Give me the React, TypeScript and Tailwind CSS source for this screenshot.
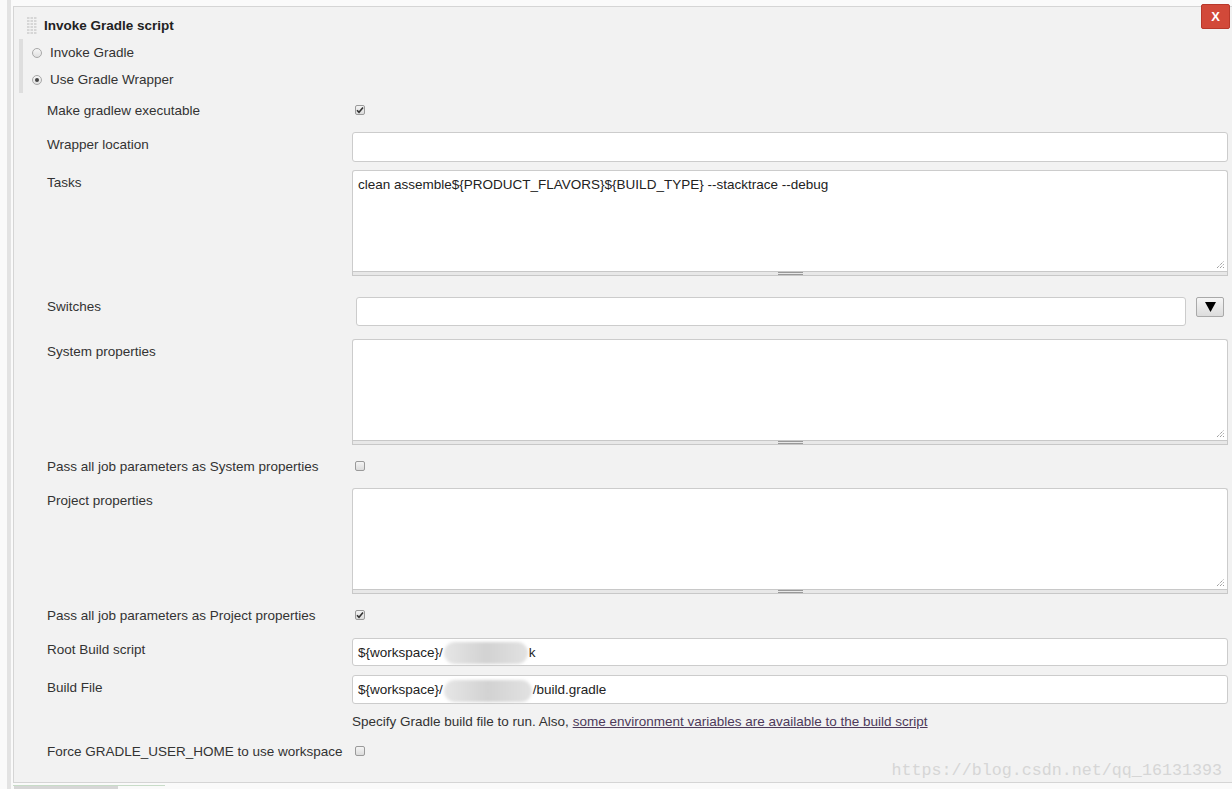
import React from "react";

const font = { fontFamily: '"Liberation Sans", Arial, sans-serif' };

function Checkbox({ checked }: { checked?: boolean }) {
    return (
        <span className="ml-[3px] flex h-[10px] w-[10px] items-center justify-center rounded-[2px] border border-[#9a9a9a] bg-gradient-to-b from-[#f4f4f4] to-[#dcdcdc]">
            {checked && (
                <svg width="8" height="8" viewBox="0 0 8 8">
                    <path d="M1 4.2 L3 6.3 L7 1.5" fill="none" stroke="#333" strokeWidth="1.6" />
                </svg>
            )}
        </span>
    );
}

function Radio({ checked, label }: { checked?: boolean; label: string }) {
    return (
        <div className="flex h-[27px] items-center">
            <span className="ml-[9px] flex h-[10px] w-[10px] items-center justify-center rounded-full border border-[#a8a8a8] bg-gradient-to-b from-[#f6f6f6] to-[#e0e0e0]">
                {checked && <span className="h-[4px] w-[4px] rounded-full bg-[#444]" />}
            </span>
            <span className="ml-[8px] pt-[2px] text-[13.5px] text-[#333]">{label}</span>
        </div>
    );
}

function Label({ children, pt = 0 }: { children: React.ReactNode; pt?: number }) {
    return (
        <div
            className="w-[305px] shrink-0 whitespace-nowrap text-[13.5px] leading-[18px] text-[#333]"
            style={{ paddingTop: pt + 1 }}
        >
            {children}
        </div>
    );
}

function TextArea({ value }: { value?: string }) {
    return (
        <div className="flex-1">
            <div className="relative h-[101px] rounded-t-[3px] border border-b-0 border-[#cccccc] bg-white pl-[5px] pt-[5px] text-[13.5px] leading-[18px] text-[#222]">
                {value}
                <svg className="absolute bottom-[2px] right-[2px]" width="9" height="9" viewBox="0 0 9 9">
                    <path d="M1 8 L8 1 M4 8 L8 4 M7 8 L8 7" stroke="#777" strokeWidth="1" strokeDasharray="1 1" />
                </svg>
            </div>
            <div className="flex h-[5px] items-center justify-center border border-[#c8c8c8] bg-[#e8e8e8]">
                <div className="flex w-[25px] flex-col gap-[1px]">
                    <span className="h-[1px] bg-[#999]" />
                    <span className="h-[1px] bg-[#999]" />
                </div>
            </div>
        </div>
    );
}

// blurred-out part of a path
function Blob({ w }: { w: number }) {
    return (
        <span className="relative inline-block h-[24px]" style={{ width: w }}>
            <span className="absolute inset-x-[1px] inset-y-[1px] rounded-full bg-gradient-to-r from-[#e6e6e6] via-[#d2d2d2] to-[#e2e2e2] blur-[1.5px]" />
        </span>
    );
}

export default function App() {
    return (
        <div className="relative flex h-[789px] w-[1232px] overflow-hidden bg-[#fafafa]" style={font}>
            <div className="ml-[7px] h-full w-[4px] bg-[#e3e3e3]" />
            <div className="ml-[2px] flex flex-1 flex-col">
                <div className="relative mt-[6px] h-[778px] border-b border-l border-t border-[#d5d5d5] bg-[#f2f2f2] pr-[4px]">
                    <button className="absolute right-[2px] top-[-3px] flex h-[25px] w-[29px] items-center justify-center rounded-[2px] border border-[#b8382a] bg-[#d24939] text-[13px] font-bold text-white">
                        X
                    </button>

                    {/* header */}
                    <div className="mt-[8px] flex h-[20px] items-center">
                        <svg className="ml-[13px]" width="10" height="17" viewBox="0 0 10 17">
                            {Array.from({ length: 6 }).map((_, r) =>
                                [0, 1, 2].map(c => (
                                    <rect key={`${r}-${c}`} x={c * 3.5} y={r * 3} width="2.5" height="2" fill="#d6d6d6" />
                                ))
                            )}
                        </svg>
                        <span className="ml-[7px] pt-[2px] text-[13.5px] font-bold text-[#222]">Invoke Gradle script</span>
                    </div>

                    {/* radio group */}
                    <div className="ml-[5px] mt-[4px] h-[54px] border-l-[4px] border-[#dedede]">
                        <Radio label="Invoke Gradle" />
                        <Radio label="Use Gradle Wrapper" checked />
                    </div>

                    {/* form */}
                    <div className="pl-[33px]">
                        <div className="flex h-[34px] items-center">
                            <Label pt={1}>Make gradlew executable</Label>
                            <Checkbox checked />
                        </div>

                        <div className="mt-[5px] flex">
                            <Label pt={3}>Wrapper location</Label>
                            <div className="h-[30px] flex-1 rounded-[3px] border border-[#cccccc] bg-white" />
                        </div>

                        <div className="mt-[8px] flex">
                            <Label pt={3}>Tasks</Label>
                            <TextArea value="clean assemble${PRODUCT_FLAVORS}${BUILD_TYPE} --stacktrace --debug" />
                        </div>

                        <div className="mt-[21px] flex">
                            <Label>Switches</Label>
                            <div className="ml-[4px] h-[29px] flex-1 rounded-[3px] border border-[#cccccc] bg-white" />
                            <div className="ml-[10px] flex h-[20px] w-[28px] items-center justify-center rounded-[2px] border border-[#a9a9a9] bg-gradient-to-b from-[#f6f6f6] to-[#dcdcdc]">
                                <svg width="11" height="10" viewBox="0 0 11 10">
                                    <path d="M0 0 L11 0 L5.5 10 Z" fill="#000" />
                                </svg>
                            </div>
                            <div className="w-[4px]" />
                        </div>

                        <div className="mt-[13px] flex">
                            <Label pt={3}>System properties</Label>
                            <TextArea />
                        </div>

                        <div className="mt-[11px] flex h-[20px] items-center">
                            <Label pt={1}>Pass all job parameters as System properties</Label>
                            <Checkbox />
                        </div>

                        <div className="mt-[12px] flex">
                            <Label pt={3}>Project properties</Label>
                            <TextArea />
                        </div>

                        <div className="mt-[11px] flex h-[20px] items-center">
                            <Label pt={1}>Pass all job parameters as Project properties</Label>
                            <Checkbox checked />
                        </div>

                        <div className="mt-[13px] flex">
                            <Label pt={2}>Root Build script</Label>
                            <div className="flex h-[28px] flex-1 items-center rounded-[3px] border border-[#cccccc] bg-white pl-[5px] pt-[2px] text-[13.5px] text-[#222]">
                                <span>{"${workspace}/"}</span>
                                <Blob w={86} />
                                <span>k</span>
                            </div>
                        </div>

                        <div className="mt-[9px] flex">
                            <Label pt={3}>Build File</Label>
                            <div className="flex h-[29px] flex-1 items-center rounded-[3px] border border-[#cccccc] bg-white pl-[5px] pt-[2px] text-[13.5px] text-[#222]">
                                <span>{"${workspace}/"}</span>
                                <Blob w={90} />
                                <span>/build.gradle</span>
                            </div>
                        </div>

                        <div className="mt-[7px] flex h-[20px] items-center">
                            <div className="w-[305px] shrink-0" />
                            <span className="pt-[2px] text-[13.5px] text-[#333]">
                                Specify Gradle build file to run. Also,{" "}
                                <a className="text-[#4d3a5a] underline">
                                    some environment variables are available to the build script
                                </a>
                            </span>
                        </div>

                        <div className="mt-[10px] flex h-[20px] items-center">
                            <Label pt={1}>Force GRADLE_USER_HOME to use workspace</Label>
                            <Checkbox />
                        </div>
                    </div>

                    <div
                        className="absolute right-[10px] top-[751px] text-[16.7px] text-[#d6d6d6]"
                        style={{ fontFamily: '"Liberation Mono", monospace' }}
                    >
                        https://blog.csdn.net/qq_16131393
                    </div>
                </div>
                <div className="mt-[2px] h-[4px] w-[152px] border-t border-[#c8dcc8]">
                    <div className="ml-[1px] h-[3px] w-[104px] bg-[#d6d6d6]" />
                </div>
            </div>
        </div>
    );
}
